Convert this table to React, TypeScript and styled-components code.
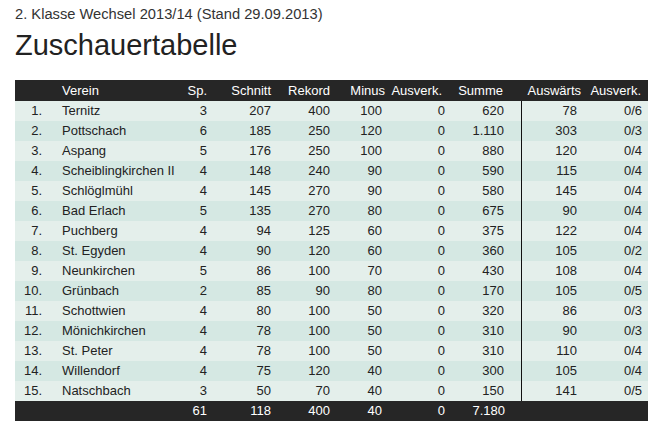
import React from "react";
import styled, { createGlobalStyle } from "styled-components";

const GlobalStyle = createGlobalStyle`
  html, body { margin: 0; padding: 0; background: #ffffff; }
  body { font-family: "Liberation Sans", Arial, sans-serif; }
`;

const COLS = "33px 132px 33px 64px 59px 52px 63px 71px 61px 65px";

const Page = styled.div`
  padding: 6px 15px 0 15px;
  width: 633px;
`;

const Subtitle = styled.div`
  font-size: 14.7px;
  line-height: 16px;
  color: #333333;
`;

const Title = styled.h1`
  margin: 7px 0 19px 0;
  font-size: 29px;
  line-height: 32px;
  font-weight: normal;
  color: #222222;
`;

const Table = styled.div`
  display: flex;
  flex-direction: column;
  font-size: 13px;
`;

const Row = styled.div<{ $variant: "head" | "odd" | "even" | "foot" }>`
  display: grid;
  grid-template-columns: ${COLS};
  height: ${(p) => (p.$variant === "head" ? "21px" : "20px")};
  line-height: ${(p) => (p.$variant === "head" ? "21px" : "20px")};
  background: ${(p) =>
    p.$variant === "head" || p.$variant === "foot"
      ? "#262626"
      : p.$variant === "odd"
      ? "#e4efeb"
      : "#d5e8e3"};
  color: ${(p) => (p.$variant === "head" || p.$variant === "foot" ? "#ffffff" : "#222222")};
`;

const Cell = styled.div<{ $left?: boolean; $pad: number; $divider?: boolean }>`
  text-align: ${(p) => (p.$left ? "left" : "right")};
  padding-left: ${(p) => (p.$left ? p.$pad : 0)}px;
  padding-right: ${(p) => (p.$left ? 0 : p.$pad)}px;
  border-right: ${(p) => (p.$divider ? "1px solid #111111" : "none")};
  white-space: nowrap;
  overflow: hidden;
`;

type Team = [number, string, number, number, number, number, number, string, number, string];

const teams: Team[] = [
  [1, "Ternitz", 3, 207, 400, 100, 0, "620", 78, "0/6"],
  [2, "Pottschach", 6, 185, 250, 120, 0, "1.110", 303, "0/3"],
  [3, "Aspang", 5, 176, 250, 100, 0, "880", 120, "0/4"],
  [4, "Scheiblingkirchen II", 4, 148, 240, 90, 0, "590", 115, "0/4"],
  [5, "Schlöglmühl", 4, 145, 270, 90, 0, "580", 145, "0/4"],
  [6, "Bad Erlach", 5, 135, 270, 80, 0, "675", 90, "0/4"],
  [7, "Puchberg", 4, 94, 125, 60, 0, "375", 122, "0/4"],
  [8, "St. Egyden", 4, 90, 120, 60, 0, "360", 105, "0/2"],
  [9, "Neunkirchen", 5, 86, 100, 70, 0, "430", 108, "0/4"],
  [10, "Grünbach", 2, 85, 90, 80, 0, "170", 105, "0/5"],
  [11, "Schottwien", 4, 80, 100, 50, 0, "320", 86, "0/3"],
  [12, "Mönichkirchen", 4, 78, 100, 50, 0, "310", 90, "0/3"],
  [13, "St. Peter", 4, 78, 100, 50, 0, "310", 110, "0/4"],
  [14, "Willendorf", 4, 75, 120, 40, 0, "300", 105, "0/4"],
  [15, "Natschbach", 3, 50, 70, 40, 0, "150", 141, "0/5"],
];

// body padding per column and header padding per column
const bodyPad = [6, 14, 6, 6, 6, 6, 6, 17, 6, 6];
const headPad = [6, 14, 6, 6, 6, 3, 9, 19, 2, 7];

const headers = ["", "Verein", "Sp.", "Schnitt", "Rekord", "Minus", "Ausverk.", "Summe", "Auswärts", "Ausverk."];

export default function App() {
  return (
    <>
      <GlobalStyle />
      <Page>
        <Subtitle>2. Klasse Wechsel 2013/14 (Stand 29.09.2013)</Subtitle>
        <Title>Zuschauertabelle</Title>
        <Table>
          <Row $variant="head">
            {headers.map((h, i) => (
              <Cell key={i} $left={i === 1} $pad={headPad[i]}>
                {h}
              </Cell>
            ))}
          </Row>
          {teams.map((t, r) => (
            <Row key={t[0]} $variant={r % 2 === 0 ? "odd" : "even"}>
              {t.map((v, i) => (
                <Cell key={i} $left={i === 1} $pad={bodyPad[i]} $divider={i === 7}>
                  {i === 0 ? `${v}.` : v}
                </Cell>
              ))}
            </Row>
          ))}
          <Row $variant="foot">
            {["", "", "61", "118", "400", "40", "0", "7.180", "", ""].map((v, i) => (
              <Cell key={i} $left={i === 1} $pad={bodyPad[i]}>
                {v}
              </Cell>
            ))}
          </Row>
        </Table>
      </Page>
    </>
  );
}
